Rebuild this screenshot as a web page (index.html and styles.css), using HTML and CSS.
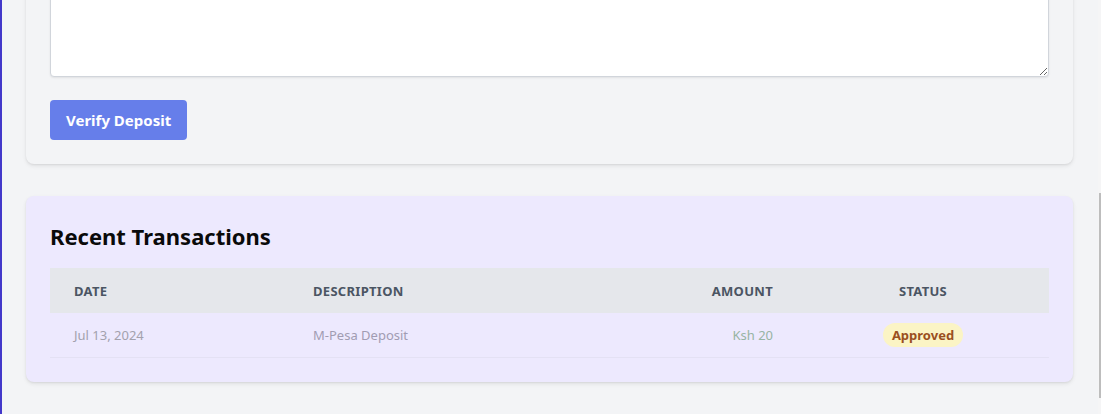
FILE: index.html
```html
<!DOCTYPE html>
<html lang="en">
<head>
<meta charset="utf-8">
<title>Deposit</title>
<link rel="stylesheet" href="styles.css">
</head>
<body>
<div class="layout">
  <aside class="sidebar-edge"></aside>
  <main class="main">
    <section class="card card-form">
      <textarea class="message-input" aria-label="M-Pesa message"></textarea>
      <button class="btn-primary" type="button">Verify Deposit</button>
    </section>
    <section class="card card-transactions">
      <h2 class="card-title">Recent Transactions</h2>
      <table class="tx-table">
        <thead>
          <tr>
            <th class="col-date">Date</th>
            <th class="col-desc">Description</th>
            <th class="col-amount">Amount</th>
            <th class="col-status">Status</th>
          </tr>
        </thead>
        <tbody>
          <tr>
            <td class="col-date cell-date">Jul 13, 2024</td>
            <td class="col-desc cell-desc">M-Pesa Deposit</td>
            <td class="col-amount cell-amount">Ksh 20</td>
            <td class="col-status"><span class="badge badge-approved">Approved</span></td>
          </tr>
        </tbody>
      </table>
    </section>
  </main>
</div>
<div class="scroll-track"><div class="scroll-thumb"></div></div>
</body>
</html>
```
FILE: styles.css
```css
* { box-sizing: border-box; }
html, body { margin: 0; padding: 0; height: 100%; overflow: hidden; }
body {
  background: #f3f4f6;
  font-family: "Noto Sans", "Open Sans", sans-serif;
  color: #111827;
}
.layout { display: flex; min-height: 414px; }
.sidebar-edge { width: 2px; flex: 0 0 2px; background: #4338ca; }
.main {
  flex: 1;
  padding: 0 28px 0 24px;
  display: flex;
  flex-direction: column;
  gap: 32px;
}
.card {
  border-radius: 8px;
  box-shadow: 0 2px 4px rgba(0,0,0,0.08), 0 1px 2px rgba(0,0,0,0.06);
  padding: 24px;
}
.card-form {
  background: #f3f4f6;
  margin-top: -60px;
  display: flex;
  flex-direction: column;
  align-items: flex-start;
  gap: 23px;
}
.message-input {
  display: block;
  width: 100%;
  height: 113px;
  border: 1px solid #d1d5db;
  border-radius: 4px;
  background: #fff;
  box-shadow: 0 1px 2px rgba(0,0,0,0.08);
  font-family: inherit;
}
.btn-primary {
  height: 40px;
  padding: 0 16px;
  border: 0;
  border-radius: 4px;
  background: #667eea;
  color: #fff;
  font-family: inherit;
  font-size: 15px;
  font-weight: 700;
}
.card-transactions { background: #ede9fe; }
.card-title {
  margin: 0 0 16px;
  font-size: 22px;
  line-height: 32px;
  font-weight: 700;
  color: #0a0a0a;
}
.tx-table {
  width: 100%;
  border-collapse: collapse;
  font-size: 13px;
  line-height: 20px;
}
.tx-table thead tr { background: #e5e7eb; }
.tx-table th {
  padding: 13px 24px 12px;
  text-transform: uppercase;
  font-weight: 700;
  color: #4b5563;
  letter-spacing: 0.3px;
}
.tx-table td {
  padding: 12px 24px;
  border-bottom: 1px solid #e4e1f4;
}
.col-date { width: 239px; text-align: left; }
.col-desc { text-align: left; }
.col-amount { width: 200px; text-align: right; }
.col-status { width: 252px; text-align: center; }
.cell-date { color: #a3a1ad; }
.cell-desc { color: #a19cb2; }
.cell-amount { color: #97b4a4; }
.badge {
  padding: 3px 9px;
  border-radius: 999px;
  font-size: 13px;
  font-weight: 700;
}
.badge-approved { background: #fbf4c5; color: #9a4f1f; }
.scroll-track {
  position: fixed;
  top: 0; right: 0;
  width: 3px; height: 414px;
  background: #f5f5f6;
}
.scroll-thumb {
  position: absolute;
  left: 1px; top: 193px;
  width: 2px; height: 205px;
  background: #bdbdbd;
}
```
